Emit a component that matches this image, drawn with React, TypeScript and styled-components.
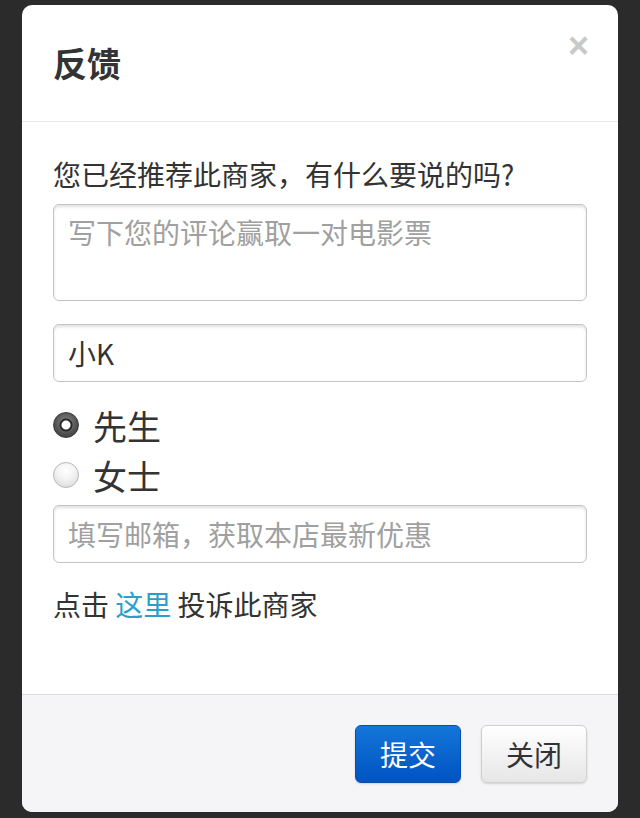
import React from 'react';
import styled, { createGlobalStyle } from 'styled-components';

const GlobalStyle = createGlobalStyle`
  html, body {
    margin: 0;
    padding: 0;
    background: #2b2b2b;
  }
  body {
    font-family: "Noto Sans CJK SC", "Noto Sans", sans-serif;
  }
`;

const Page = styled.div`
  padding: 5px 22px 6px 22px;
`;

const Modal = styled.div`
  height: 807px;
  background: #ffffff;
  border-radius: 10px;
  overflow: hidden;
  display: flex;
  flex-direction: column;
`;

const Header = styled.div`
  height: 116px;
  flex: none;
  display: flex;
  justify-content: space-between;
  align-items: flex-start;
  padding: 0 31px;
  border-bottom: 1px solid #e8e8e8;
`;

const Title = styled.h3`
  margin: 0;
  align-self: center;
  font-size: 34px;
  font-weight: 700;
  color: #333;
  line-height: 40px;
`;

const Close = styled.button`
  margin-top: 21px;
  margin-right: -2px;
  padding: 0;
  border: none;
  background: none;
  font-family: "Liberation Sans", sans-serif;
  font-size: 36px;
  font-weight: 700;
  line-height: 40px;
  color: #c9c9c9;
`;

const Body = styled.div`
  flex: 1;
  display: flex;
  flex-direction: column;
  padding: 32px 31px 0 31px;
`;

const Question = styled.p`
  margin: 0;
  font-size: 28px;
  line-height: 40px;
  color: #333;
`;

const fieldBase = `
  box-sizing: border-box;
  width: 100%;
  border: 1px solid #c4c4c4;
  border-radius: 6px;
  box-shadow: inset 0 2px 3px rgba(0, 0, 0, 0.12);
  background: #fff;
  font-family: "Noto Sans CJK SC", "Noto Sans", sans-serif;
  font-size: 28px;
  color: #333;
  padding: 0 14px;
  outline: none;
  &::placeholder {
    color: #a0a0a0;
  }
`;

const Comment = styled.textarea`
  ${fieldBase}
  margin-top: 10px;
  height: 97px;
  padding-top: 7px;
  line-height: 40px;
  resize: none;
`;

const Field = styled.input<{ $gap: number }>`
  ${fieldBase}
  display: block;
  margin-top: ${(p) => p.$gap}px;
  height: 58px;
`;

const RadioRow = styled.label<{ $gap: number }>`
  display: flex;
  align-items: center;
  gap: 14px;
  height: 50px;
  margin-top: ${(p) => p.$gap}px;
  font-size: 34px;
  color: #333;
`;

const Radio = styled.input`
  appearance: none;
  margin: 0;
  width: 26px;
  height: 26px;
  border-radius: 50%;
  border: 1px solid #b8b8b8;
  background: radial-gradient(circle at 50% 30%, #ffffff 0%, #f2f2f2 45%, #d4d4d4 100%);
  &:checked {
    border-color: #3a3a3a;
    background:
      radial-gradient(circle, #ffffff 0, #ffffff 4px, #2a2a2a 5px, #2a2a2a 6px, transparent 7px),
      radial-gradient(circle at 50% 40%, #8a8a8a 0%, #555 55%, #2c2c2c 100%);
  }
`;

const Note = styled.p`
  margin: 21px 0 0 0;
  font-size: 28px;
  line-height: 40px;
  color: #333;
`;

const Link = styled.a`
  color: #2a9fc9;
  text-decoration: none;
`;

const Footer = styled.div`
  flex: none;
  height: 118px;
  box-sizing: border-box;
  border-top: 1px solid #dcdcdc;
  background: #f5f5f7;
  display: flex;
  justify-content: flex-end;
  align-items: flex-start;
  gap: 20px;
  padding: 30px 31px 0 0;
`;

const Button = styled.button<{ $primary?: boolean }>`
  width: 106px;
  height: 58px;
  border-radius: 6px;
  font-family: "Noto Sans CJK SC", "Noto Sans", sans-serif;
  font-size: 28px;
  padding: 0;
  border: 1px solid ${(p) => (p.$primary ? '#0a4ea8' : '#cfcfcf')};
  color: ${(p) => (p.$primary ? '#ffffff' : '#333333')};
  background: ${(p) =>
    p.$primary
      ? 'linear-gradient(#1476d8, #0053c2)'
      : 'linear-gradient(#ffffff, #e6e6e6)'};
  box-shadow: 0 1px 2px rgba(0, 0, 0, 0.15);
`;

export default function App() {
  return (
    <Page>
      <GlobalStyle />
      <Modal>
        <Header>
          <Title>反馈</Title>
          <Close>×</Close>
        </Header>
        <Body>
          <Question>您已经推荐此商家，有什么要说的吗?</Question>
          <Comment placeholder="写下您的评论赢取一对电影票" />
          <Field $gap={23} defaultValue="小K" />
          <RadioRow $gap={18}>
            <Radio type="radio" name="sex" defaultChecked />
            先生
          </RadioRow>
          <RadioRow $gap={0}>
            <Radio type="radio" name="sex" />
            女士
          </RadioRow>
          <Field $gap={5} placeholder="填写邮箱，获取本店最新优惠" />
          <Note>
            点击 <Link href="#">这里</Link> 投诉此商家
          </Note>
        </Body>
        <Footer>
          <Button $primary>提交</Button>
          <Button>关闭</Button>
        </Footer>
      </Modal>
    </Page>
  );
}
